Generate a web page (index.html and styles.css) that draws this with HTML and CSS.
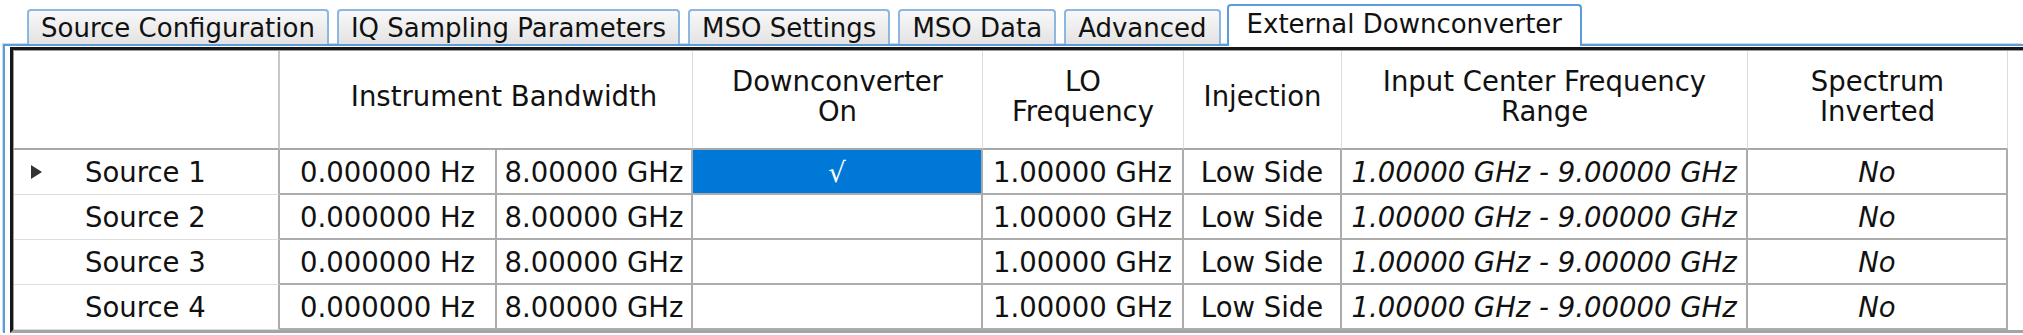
FILE: index.html
```html
<!DOCTYPE html>
<html lang="en">
<head>
    <meta charset="UTF-8">
    <meta name="viewport" content="width=device-width, initial-scale=1.0">
    <title>External Downconverter</title>
    <link rel="stylesheet" href="styles.css">
</head>
<body>
    <div class="tabs">
        <div class="tab">Source Configuration</div>
        <div class="tab">IQ Sampling Parameters</div>
        <div class="tab">MSO Settings</div>
        <div class="tab">MSO Data</div>
        <div class="tab">Advanced</div>
        <div class="tab active">External Downconverter</div>
    </div>

    <div class="panel">
        <div class="grid">
            <div class="grid-inner">
                <!-- header -->
                <div class="hd corner"></div>
                <div class="hd span2">Instrument Bandwidth</div>
                <div class="hd">Downconverter<br>On</div>
                <div class="hd">LO<br>Frequency</div>
                <div class="hd">Injection</div>
                <div class="hd">Input Center Frequency<br>Range</div>
                <div class="hd">Spectrum<br>Inverted</div>
                <div class="filler"></div>

                <!-- rows -->
                <div class="rh"><span class="arrow"></span>Source 1</div>
                <div class="cell">0.000000 Hz</div>
                <div class="cell">8.00000 GHz</div>
                <div class="cell selected">&#8730;</div>
                <div class="cell">1.00000 GHz</div>
                <div class="cell">Low Side</div>
                <div class="cell it">1.00000 GHz - 9.00000 GHz</div>
                <div class="cell it">No</div>
                <div class="filler"></div>

                <div class="rh"><span class="arrow none"></span>Source 2</div>
                <div class="cell">0.000000 Hz</div>
                <div class="cell">8.00000 GHz</div>
                <div class="cell"></div>
                <div class="cell">1.00000 GHz</div>
                <div class="cell">Low Side</div>
                <div class="cell it">1.00000 GHz - 9.00000 GHz</div>
                <div class="cell it">No</div>
                <div class="filler"></div>

                <div class="rh"><span class="arrow none"></span>Source 3</div>
                <div class="cell">0.000000 Hz</div>
                <div class="cell">8.00000 GHz</div>
                <div class="cell"></div>
                <div class="cell">1.00000 GHz</div>
                <div class="cell">Low Side</div>
                <div class="cell it">1.00000 GHz - 9.00000 GHz</div>
                <div class="cell it">No</div>
                <div class="filler"></div>

                <div class="rh"><span class="arrow none"></span>Source 4</div>
                <div class="cell">0.000000 Hz</div>
                <div class="cell">8.00000 GHz</div>
                <div class="cell"></div>
                <div class="cell">1.00000 GHz</div>
                <div class="cell">Low Side</div>
                <div class="cell it">1.00000 GHz - 9.00000 GHz</div>
                <div class="cell it">No</div>
                <div class="filler"></div>
            </div>
        </div>
    </div>
</body>
</html>
```

FILE: styles.css
```css
html, body {
    margin: 0;
    height: 335px;
    overflow: hidden;
    background: #fff;
}
body {
    font-family: "DejaVu Sans", "Liberation Sans", sans-serif;
    color: #111;
}

/* tab strip */
.tabs {
    display: flex;
    align-items: flex-end;
    height: 44px;
    padding-left: 27px;
}
.tab {
    box-sizing: border-box;
    height: 35px;
    padding: 0 12px;
    margin-right: 8px;
    border: 2px solid #8db6e0;
    border-bottom: none;
    border-radius: 4px 4px 0 0;
    background: linear-gradient(#f8f8f8, #e3e3e3);
    display: flex;
    align-items: center;
    font-size: 26px;
    white-space: nowrap;
}
.tab.active {
    height: 42px;
    padding: 0 18px 4px;
    margin-left: -2px;
    margin-bottom: -2px;
    background: #fff;
    border-color: #5d9cd8;
    position: relative;
    z-index: 1;
}

/* tab page */
.panel {
    margin-left: 3px;
    padding: 1px 0 0 5px;
    border-top: 2px solid #5d9cd8;
    border-left: 2px solid #5d9cd8;
    box-shadow: -1px -1px 0 #c4dcf2;
}
.grid {
    border-top: 3px solid #171717;
    border-left: 3px solid #171717;
    border-bottom: 3px solid #a4a4a4;
}
.grid-inner {
    display: grid;
    grid-template-columns: 266px 217px 196px 290px 201px 158px 406px 260px 1fr;
    grid-template-rows: 99px repeat(4, 45px);
    border-top: 1px solid #9c9c9c;
    border-left: 1px solid #9c9c9c;
    font-size: 27.5px;
}

.hd, .cell, .rh {
    box-sizing: border-box;
    display: flex;
    align-items: center;
    white-space: nowrap;
    background: #fff;
}
.hd {
    justify-content: center;
    text-align: center;
    line-height: 30px;
    padding-bottom: 8px;
    border-right: 1px solid #dcdcdc;
    border-bottom: 2px solid #a8a8a8;
}
.hd.corner {
    border-right: 2px solid #c8c8c8;
}
.hd.span2 {
    grid-column: span 2;
    padding-left: 36px;
}
.cell {
    justify-content: center;
    border-right: 2px solid #acacac;
    border-bottom: 2px solid #acacac;
}
.cell.it {
    font-style: italic;
}
.cell.selected {
    background: #0078d7;
    color: #fff;
}
.filler {
    background: #fff;
}

/* row headers */
.rh {
    padding-left: 17px;
    border-right: 2px solid #acacac;
    border-bottom: 1px solid #dedede;
}
.arrow {
    width: 0;
    height: 0;
    margin-right: 43px;
    border-left: 11px solid #333;
    border-top: 7px solid transparent;
    border-bottom: 7px solid transparent;
}
.arrow.none {
    border-left-color: transparent;
}
```
